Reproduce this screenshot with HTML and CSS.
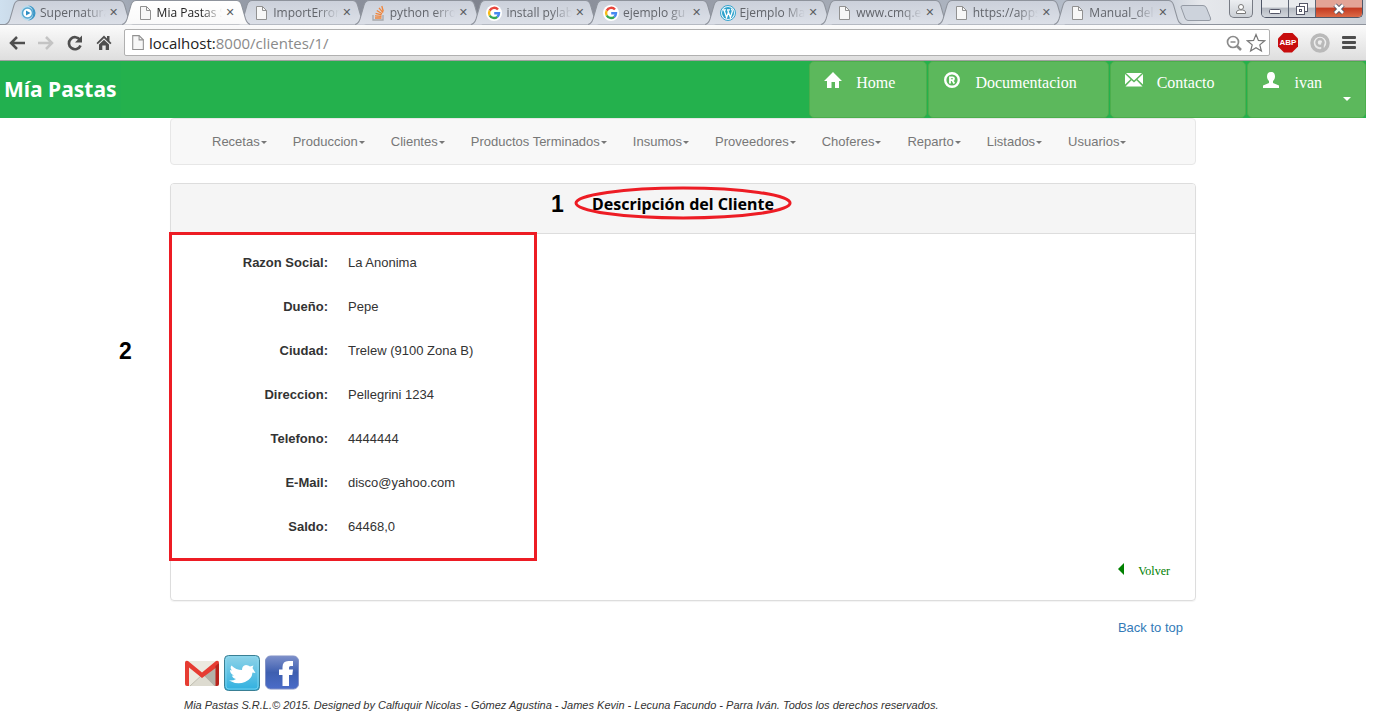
FILE: index.html
```html
<!DOCTYPE html>
<html lang="es">
<head>
<meta charset="utf-8">
<title>Mia Pastas S.R.L.</title>
<link rel="stylesheet" href="styles.css">
</head>
<body>
<svg class="defs" aria-hidden="true">
  <defs>
    <linearGradient id="tabFill" x1="0" y1="0" x2="0" y2="1"><stop offset="0" stop-color="#cbd0da"/><stop offset="1" stop-color="#dce0e8"/></linearGradient>
    <linearGradient id="tabOn" x1="0" y1="0" x2="0" y2="1"><stop offset="0" stop-color="#ffffff"/><stop offset="1" stop-color="#f9f9f9"/></linearGradient>
    <linearGradient id="twFill" x1="0" y1="0" x2="0" y2="1"><stop offset="0" stop-color="#8fd3e8"/><stop offset="1" stop-color="#2fb0e0"/></linearGradient>
    <linearGradient id="fbFill" x1="0" y1="0" x2="0" y2="1"><stop offset="0" stop-color="#7c8fca"/><stop offset=".5" stop-color="#3e5fb0"/><stop offset="1" stop-color="#4a6cc8"/></linearGradient>
    <symbol id="tabShape" viewBox="0 0 128 25" preserveAspectRatio="none"><path d="M0 24.500C3 24 4 22 5 19L9 5C10 2 11 .5 14 .5H114C117 .5 118 2 119 5L123 19C124 22 125 24 128 24.500" stroke="#8e939c"/></symbol>
    <symbol id="page" viewBox="0 0 16 16"><path d="M3.500 1.500h6l4 4v9h-10z" fill="#f7f7f7" stroke="#919191"/><path d="M9.500 1.500v4h4" fill="none" stroke="#919191"/></symbol>
    <symbol id="google" viewBox="0 0 16 16"><circle cx="8" cy="8" r="8" fill="#fff"/><g fill="none" stroke-width="2.400"><path d="M12 4.600A5 5 0 0 0 3.700 5.600" stroke="#e8453c"/><path d="M3.700 5.600A5 5 0 0 0 3.700 10.500" stroke="#f8bb15"/><path d="M3.700 10.500A5 5 0 0 0 11.300 11.800" stroke="#34a853"/><path d="M11.300 11.800A5 5 0 0 0 13 8.200H8.200" stroke="#4688f1"/></g></symbol>
  </defs>
</svg>

<header class="browser">
  <div class="strip">
    <ul class="tabs">
      <li class="tab"><svg class="shape" fill="url(#tabFill)"><use href="#tabShape"/></svg><svg class="fav" viewBox="0 0 16 16"><circle cx="8" cy="8" r="7.500" fill="#b8dcee"/><path d="M8 .5A7.500 7.500 0 0 1 8 15.500A8 8 0 0 0 8 .5" fill="#3d97c6"/><circle cx="7.500" cy="8" r="5" fill="#fff" stroke="#58a9d2" stroke-width="1.500"/><path d="M6 5.500L10.500 8L6 10.500z" fill="#2f8fc4"/></svg><span class="tab-title">Supernatura</span><button class="close" aria-label="Cerrar">✕</button></li>
      <li class="tab on"><svg class="shape" fill="url(#tabOn)"><use href="#tabShape"/></svg><svg class="fav"><use href="#page"/></svg><span class="tab-title">Mia Pastas S</span><button class="close" aria-label="Cerrar">✕</button></li>
      <li class="tab"><svg class="shape" fill="url(#tabFill)"><use href="#tabShape"/></svg><svg class="fav"><use href="#page"/></svg><span class="tab-title">ImportError</span><button class="close" aria-label="Cerrar">✕</button></li>
      <li class="tab"><svg class="shape" fill="url(#tabFill)"><use href="#tabShape"/></svg><svg class="fav" viewBox="0 0 16 16" fill="none"><path d="M3 10v5h10v-5" stroke="#a6a8ab" stroke-width="1.300"/><path d="M5 13h6.500M5 10.800l6.500.5M5.600 8.300l6 1.600M6.800 5.500l5.300 3.200M9 2.800l4 4.800M11.800 1l1.500 5.500" stroke="#f0843a" stroke-width="1.300"/></svg><span class="tab-title">python erro</span><button class="close" aria-label="Cerrar">✕</button></li>
      <li class="tab"><svg class="shape" fill="url(#tabFill)"><use href="#tabShape"/></svg><svg class="fav"><use href="#google"/></svg><span class="tab-title">install pylab</span><button class="close" aria-label="Cerrar">✕</button></li>
      <li class="tab"><svg class="shape" fill="url(#tabFill)"><use href="#tabShape"/></svg><svg class="fav"><use href="#google"/></svg><span class="tab-title">ejemplo gu</span><button class="close" aria-label="Cerrar">✕</button></li>
      <li class="tab"><svg class="shape" fill="url(#tabFill)"><use href="#tabShape"/></svg><svg class="fav" viewBox="0 0 16 16"><circle cx="8" cy="8" r="7.500" fill="#e8f6fb" stroke="#35a3cd"/><circle cx="8" cy="8" r="6" fill="#2ea2cc"/><path d="M3 4.800h3M7 4.800h3M4 5l2.600 7.500L8.300 7.500M7.700 5l2.700 7.500L12.300 6.500Q12.500 5 11.300 3.800" fill="none" stroke="#fff" stroke-width="1.300"/></svg><span class="tab-title">Ejemplo Ma</span><button class="close" aria-label="Cerrar">✕</button></li>
      <li class="tab"><svg class="shape" fill="url(#tabFill)"><use href="#tabShape"/></svg><svg class="fav"><use href="#page"/></svg><span class="tab-title">www.cmq.e</span><button class="close" aria-label="Cerrar">✕</button></li>
      <li class="tab"><svg class="shape" fill="url(#tabFill)"><use href="#tabShape"/></svg><svg class="fav"><use href="#page"/></svg><span class="tab-title">https://apps</span><button class="close" aria-label="Cerrar">✕</button></li>
      <li class="tab"><svg class="shape" fill="url(#tabFill)"><use href="#tabShape"/></svg><svg class="fav"><use href="#page"/></svg><span class="tab-title">Manual_del</span><button class="close" aria-label="Cerrar">✕</button></li>
    </ul>
    <button class="newtab" aria-label="Nueva pestaña"><svg width="32" height="16" viewBox="0 0 32 16"><path d="M1 2Q1 .5 3 .5H23Q25.500 .5 26.500 3L30.500 13Q31.500 15.500 29 15.500H8Q6 15.500 5 13z" fill="#cdd3dc" stroke="#949aa4"/></svg></button>
    <div class="controls">
      <button class="user" aria-label="Usuario"><svg width="12" height="12" viewBox="0 0 12 12" fill="#fff" stroke="#777"><path d="M1.500 10.500V9Q2 7 4.500 7h3Q10 7 10.500 9v1.500z"/><circle cx="6" cy="4" r="2.500"/></svg></button>
      <div class="win">
        <button class="min" aria-label="Minimizar"><svg width="14" height="14" viewBox="0 0 14 14"><rect x="1.500" y="7.500" width="11" height="4" rx="1" fill="#fff" stroke="#555768"/></svg></button>
        <button class="max" aria-label="Restaurar"><svg width="14" height="14" viewBox="0 0 14 14" fill="#fff" stroke="#555768"><rect x="4.500" y="1.500" width="8" height="8"/><rect x="1.500" y="4.500" width="8" height="8"/><rect x="4.500" y="7.500" width="2" height="2"/></svg></button>
        <button class="exit" aria-label="Cerrar ventana"><svg width="14" height="14" viewBox="0 0 14 14"><path d="M3 3L11 11M11 3L3 11" stroke="#555768" stroke-width="4.500"/><path d="M3 3L11 11M11 3L3 11" stroke="#fff" stroke-width="2.500"/></svg></button>
      </div>
    </div>
  </div>
  <div class="toolbar">
    <button class="tool" aria-label="Atrás"><svg viewBox="0 0 18 18" fill="none" stroke="#4f4f4f" stroke-width="2.500"><path d="M17 9H3M9 3L3 9L9 15"/></svg></button>
    <button class="tool" aria-label="Adelante"><svg viewBox="0 0 18 18" fill="none" stroke="#c4c4c4" stroke-width="2.500"><path d="M1 9H15M9 3L15 9L9 15"/></svg></button>
    <button class="tool" aria-label="Recargar"><svg viewBox="0 0 18 18"><path d="M14 6A6 6 0 1 0 14.500 11.500" fill="none" stroke="#4f4f4f" stroke-width="2.700"/><path d="M16 1.500V8.500H9z" fill="#4f4f4f"/></svg></button>
    <button class="tool" aria-label="Inicio"><svg viewBox="0 0 18 18" fill="#4f4f4f"><path d="M9 1.500L1.500 9L2.700 10.300L9 4.200L15.300 10.300L16.500 9L14.500 7V2H12V4.500z"/><path d="M4 10.500L9 5.700L14 10.500V16H10.700V11.500H7.300V16H4z"/></svg></button>
    <div class="address"><svg class="doc"><use href="#page"/></svg><div class="url"><b>localhost:</b>8000/clientes/1/</div>
      <svg class="small" viewBox="0 0 18 18" fill="none" stroke="#8b8b8b"><circle cx="8" cy="8" r="5.500" stroke-width="1.700"/><path d="M12 12L16 16" stroke-width="2.500"/><path d="M5.500 8H10.500" stroke-width="1.500"/></svg>
      <svg class="star" viewBox="0 0 20 20" fill="#fff" stroke="#777" stroke-width="1.200"><path d="M10 1.500L12.400 7.400L18.700 7.800L13.800 11.900L15.400 18L10 14.700L4.600 18L6.200 11.900L1.300 7.800L7.600 7.400z"/></svg>
    </div>
    <button class="ext abp" aria-label="Adblock Plus">ABP</button>
    <button class="ext" aria-label="Extensión"><svg viewBox="0 0 20 20" fill="none"><circle cx="10" cy="10" r="8" stroke="#b9b9b9" stroke-width="3.500"/><circle cx="10" cy="9.500" r="3.500" stroke="#b9b9b9" stroke-width="2.500"/><path d="M12.500 9.500V17" stroke="#b9b9b9" stroke-width="2.500"/></svg></button>
    <button class="ext menu" aria-label="Menú"><svg viewBox="0 0 14 14" fill="#4d4d4d"><rect width="14" height="3" y="0" rx="1"/><rect width="14" height="3" y="5" rx="1"/><rect width="14" height="3" y="10" rx="1"/></svg></button>
  </div>
</header>

<div class="topbar">
  <a class="brand" href="#">Mía Pastas</a>
  <nav class="quick">
    <a class="btn home" href="#"><svg viewBox="0 0 18 16"><path d="M9 0L18 9H15V16H11V10H7.500V16H3V9H0z"/></svg>Home</a>
    <a class="btn docs" href="#"><svg viewBox="0 0 18 16"><circle cx="9" cy="8" r="6.800" fill="none" stroke="#fff" stroke-width="2.400"/><path d="M7 11.500V5.300H9.500Q11 5.300 11 6.700T9.500 8.200H7M9.300 8.200L11.300 11.500" fill="none" stroke="#fff" stroke-width="1.800"/></svg>Documentacion</a>
    <a class="btn mail" href="#"><svg viewBox="0 0 18 16"><path d="M1 1H17L9 8.500zM0 2L5.500 7.200L0 12.500zM18 2L12.500 7.200L18 12.500zM6.500 8.200L9 10.500L11.500 8.200L17.500 14.500H.5z"/></svg>Contacto</a>
    <a class="btn me" href="#"><svg viewBox="0 0 18 16"><path d="M9 0C12 0 13 2 13 4.500C13 7 12 8 11 9V11L17 13.500V16H1V13.500L7 11V9C6 8 5 7 5 4.500C5 2 6 0 9 0z"/></svg>ivan<i class="caret"></i></a>
  </nav>
</div>

<div class="container">
  <nav class="menu-bar">
    <a href="#">Recetas<i class="caret"></i></a>
    <a href="#">Produccion<i class="caret"></i></a>
    <a href="#">Clientes<i class="caret"></i></a>
    <a href="#">Productos Terminados<i class="caret"></i></a>
    <a href="#">Insumos<i class="caret"></i></a>
    <a href="#">Proveedores<i class="caret"></i></a>
    <a href="#">Choferes<i class="caret"></i></a>
    <a href="#">Reparto<i class="caret"></i></a>
    <a href="#">Listados<i class="caret"></i></a>
    <a href="#">Usuarios<i class="caret"></i></a>
  </nav>

  <main class="panel">
    <div class="panel-head">
      <h1>Descripción del Cliente
        <span class="mark one">1</span>
        <svg class="ring" viewBox="0 0 218 34" preserveAspectRatio="none"><ellipse cx="109" cy="17" rx="107" ry="15" fill="none" stroke="#ed1c24" stroke-width="3"/></svg>
      </h1>
    </div>
    <div class="panel-body">
      <dl class="details">
        <dt>Razon Social:</dt><dd>La Anonima</dd>
        <dt>Dueño:</dt><dd>Pepe</dd>
        <dt>Ciudad:</dt><dd>Trelew (9100 Zona B)</dd>
        <dt>Direccion:</dt><dd>Pellegrini 1234</dd>
        <dt>Telefono:</dt><dd>4444444</dd>
        <dt>E-Mail:</dt><dd>disco@yahoo.com</dd>
        <dt>Saldo:</dt><dd>64468,0</dd>
      </dl>
      <div class="frame"></div>
      <span class="mark two">2</span>
      <a class="back" href="#"><svg width="6" height="12" viewBox="0 0 6 12"><path d="M6 0V12L0 6z"/></svg>Volver</a>
    </div>
  </main>

  <footer class="foot">
    <a class="top" href="#">Back to top</a>
    <div class="social">
      <a href="#" aria-label="Gmail"><svg width="36" height="36" viewBox="0 0 36 36"><rect x="1" y="6" width="34" height="25" rx="2" fill="#eceae0"/><path d="M19 20L32 10V31H30z" fill="#b3b2a8"/><path d="M19 20L30 31H6z" fill="#dddbd0"/><path d="M6 31L18 20" stroke="#bdbbae"/><path d="M1 8Q1 5 4 6L18 17.500L32 6Q35 5 35 8L33 12L18 23L5 12.500V31H3Q1 31 1 29z" fill="#e63c32"/><path d="M31.500 11L35 8V29Q35 31 33 31H31.500z" fill="#b8231c"/></svg></a>
      <a href="#" aria-label="Twitter"><svg width="36" height="36" viewBox="0 0 36 36"><rect x=".5" y=".5" width="35" height="35" rx="4" fill="url(#twFill)" stroke="#397f94"/><rect x="2" y="2" width="32" height="32" rx="3" fill="none" stroke="#8bdcf2" stroke-opacity=".7"/><path d="M5 25.500Q9 26 12 24Q8.500 23 8 20.500H10Q6 18.500 6 15L8 15.500Q5.500 13 7.500 10.500Q12 15 18 15Q18 10.500 22 10Q24.500 10 26 11.500L29.500 10.500L28.500 13L31.500 18L28.500 17.500Q28 24 21 27Q13 30 5 25.500z" fill="#fff"/></svg></a>
      <a href="#" aria-label="Facebook"><svg width="36" height="36" viewBox="0 0 36 36"><rect x="1.500" y="1" width="33" height="33" rx="5" fill="url(#fbFill)" stroke="#8191c6"/><path d="M18.500 31V20H15V14.500H18.500V12Q18.500 6 24.500 6H29V11H26.500Q25 11 25 12.500V14.500H29L28.300 20H25V31z" fill="#fff"/></svg></a>
    </div>
    <p>Mia Pastas S.R.L.© 2015. Designed by Calfuquir Nicolas - Gómez Agustina - James Kevin - Lecuna Facundo - Parra Iván. Todos los derechos reservados.</p>
  </footer>
</div>
</body>
</html>
```
FILE: styles.css
```css
* { box-sizing: border-box; }
body { margin: 0; padding-right: 7px; background: #fff; font: 13px/20px "Liberation Sans", Arial, sans-serif; color: #333; }
button { margin: 0; padding: 0; border: 0; background: none; font: inherit; color: inherit; }
a { text-decoration: none; color: inherit; }
svg { display: block; flex: none; }
.defs { position: absolute; width: 0; height: 0; }

/* Browser window */
.browser { font-family: "Open Sans", "Noto Sans", sans-serif; }
.strip { display: flex; height: 25px; padding: 0 3px 0 5px; background: linear-gradient(90deg, #cfe0ef 0, #9fa6b2 10%, #80848f 35%, #a3a9b4 60%, #b9c2cf 84%, #e6e8ec 88%, #ccd1d8 100%); box-shadow: inset 0 -1px #8e939c; }
.tabs { display: flex; flex: 1; min-width: 0; margin: 0; padding: 0; list-style: none; }
.tab { position: relative; flex: 1 1 0; min-width: 0; display: flex; align-items: center; height: 25px; padding: 1px 2px 0 15px; }
.tab.on { z-index: 1; }
.shape { position: absolute; left: 0; top: 0; width: calc(100% + 12px); height: 25px; }
.fav { position: relative; width: 16px; height: 16px; }
.tab-title { position: relative; flex: 1; min-width: 0; margin-left: 4px; overflow: hidden; white-space: nowrap; font-size: 12px; line-height: 20px; color: #62656b; -webkit-mask-image: linear-gradient(90deg, #000 68%, transparent); mask-image: linear-gradient(90deg, #000 68%, transparent); }
.on .tab-title { color: #222; }
.close { position: relative; width: 12px; margin-left: 2px; font: bold 11px/20px "DejaVu Sans", sans-serif; color: #5b5d62; }
.newtab { align-self: center; margin-left: 9px; }
.controls { display: flex; gap: 8px; align-items: flex-start; margin-left: 17px; }
.user { display: flex; justify-content: center; align-items: center; width: 24px; height: 18px; border: 1px solid #777b84; border-top: 0; border-radius: 0 0 5px 5px; background: linear-gradient(#eceef1, #ccd0d6); }
.win { display: flex; height: 18px; border: 1px solid #4f5667; border-top: 0; border-radius: 0 0 5px 5px; overflow: hidden; }
.win button { display: flex; justify-content: center; align-items: center; width: 27px; background: linear-gradient(#e9ebee 40%, #b6bbc3 50%, #d2d6dc); border-right: 1px solid #5f6675; }
.win .exit { width: 46px; border: 0; background: linear-gradient(#e3a496 40%, #c43c22 50%, #dc6a48); }
.toolbar { display: flex; align-items: center; height: 36px; padding: 0 8px; background: linear-gradient(#fbfbfb, #dedede); border-bottom: 1px solid #a0a0a0; }
.tool { width: 18px; margin-right: 11px; }
.tool svg { width: 18px; height: 18px; }
.address { display: flex; flex: 1; align-items: center; height: 27px; margin-right: 8px; padding: 0 3px 0 4px; border: 1px solid #b0b0b0; border-radius: 2px; background: #fff; }
.doc { width: 17px; height: 17px; }
.url { flex: 1; margin-left: 3px; font-size: 15px; color: #8a8a8a; }
.url b { font-weight: 400; color: #222; }
.small { width: 18px; height: 18px; margin-right: 3px; }
.star { width: 20px; height: 20px; }
.ext { width: 20px; height: 20px; margin-right: 12px; }
.ext svg { width: 20px; height: 20px; }
.abp { background: #c70d0d; color: #fff; font: bold 8px/20px "Liberation Sans", sans-serif; clip-path: polygon(30% 0, 70% 0, 100% 30%, 100% 70%, 70% 100%, 30% 100%, 0 70%, 0 30%); }
.ext + .menu { width: 16px; height: 14px; margin-right: 0; }
.menu svg { width: 14px; height: 14px; }

/* Site header */
.topbar { display: flex; height: 57px; background: #24b14d; }
.brand { padding: 0 4px; font: bold 21px/56px "Noto Sans", sans-serif; color: #fff; background: #22b04f; }
.quick { display: flex; gap: 1px; margin-left: auto; }
.btn { position: relative; display: flex; align-items: flex-start; padding: 10px 31px 0 14px; border: 1px solid #4cae4c; border-radius: 5px; background: #5cb85c; font: 16px/22px "Liberation Serif", serif; color: #fff; }
.btn svg { width: 18px; height: 16px; margin-right: 14px; fill: #fff; }
.me { padding-right: 43px; }
.caret { display: inline-block; border: 3px solid transparent; border-top-color: currentColor; border-bottom: 0; vertical-align: middle; margin-left: 1px; }
.me .caret { position: absolute; right: 14px; bottom: 16px; border-width: 4px 4px 0; }

/* Page */
.container { width: 100%; max-width: 1026px; margin: 0 auto; }
.menu-bar { display: flex; flex-wrap: wrap; gap: 0 26px; padding: 13px 41px 12px; border: 1px solid #e7e7e7; border-radius: 4px; background: #f8f8f8; color: #777; }
.panel { margin-top: 18px; border: 1px solid #ddd; border-radius: 4px; box-shadow: 0 1px 1px rgba(0, 0, 0, .05); }
.panel-head { padding: 9px 0 18px; border-bottom: 1px solid #ddd; border-radius: 3px 3px 0 0; background: #f5f5f5; }
h1 { position: relative; width: max-content; margin: 0 auto; font: bold 16px/22px "Noto Sans", sans-serif; color: #000; }
.mark { position: absolute; font: bold 23px/26px "Liberation Sans", sans-serif; color: #000; }
.one { left: -41px; top: -2px; }
.ring { position: absolute; left: -18px; top: -7px; width: calc(100% + 36px); height: 34px; }
.panel-body { position: relative; padding: 19px 25px 19px; }
.details { display: grid; grid-template-columns: 132px 1fr; gap: 24px 20px; margin: 0 0 24px; }
dt { font-weight: 700; text-align: right; }
dd { margin: 0; }
.frame { position: absolute; left: -2px; top: -2px; width: 368px; height: 329px; border: 3px solid #ed1c24; }
.two { left: -52px; top: 104px; }
.back { display: flex; justify-content: flex-end; gap: 14px; font: 12px/20px "Liberation Serif", serif; color: green; fill: green; }
.back svg { margin-top: 2px; }
.foot { padding: 17px 13px 0 14px; }
.top { display: block; text-align: right; color: #337ab7; }
.social { display: flex; gap: 4px; margin-top: 17px; }
.foot p { margin: 4px 0 0; font-size: 11px; font-style: italic; }
```
